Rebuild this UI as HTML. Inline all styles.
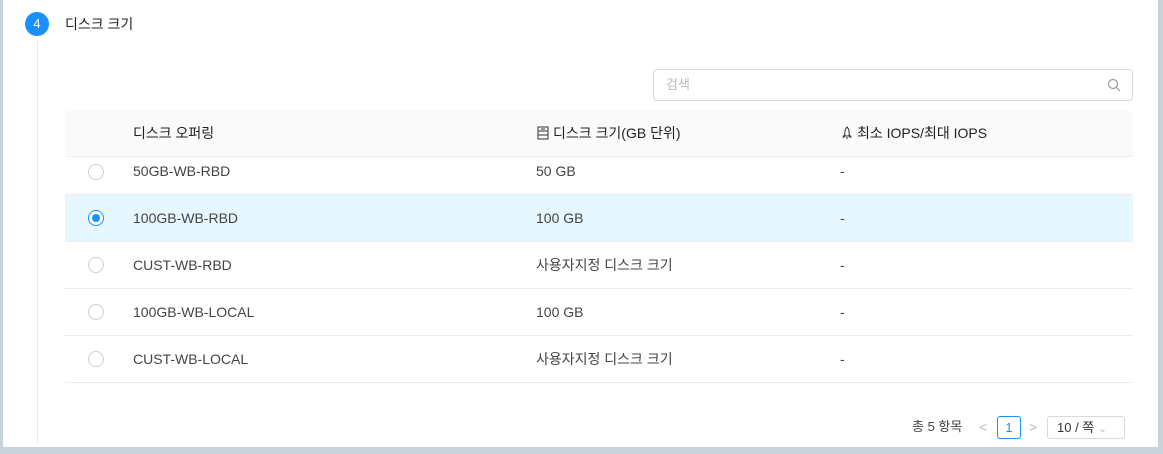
<!DOCTYPE html><html><head><meta charset="utf-8"><style>
*{margin:0;padding:0;box-sizing:border-box}
body{width:1163px;height:454px;background:#c8d2d9;font-family:"Liberation Sans","Noto Sans CJK KR",sans-serif;font-size:14px;color:#333;position:relative;overflow:hidden}
.page{position:absolute;left:3px;top:0;width:1155px;height:447px;background:#fff}
.abs{position:absolute}
.vl{left:34px;top:40px;width:1px;height:403px;background:#e8e8e8}
.step{left:22px;top:12px;width:24px;height:24px;border-radius:50%;background:#1890ff;color:#fff;font-size:13px;text-align:center;line-height:24px}
.title{left:62px;top:14px;font-size:14px;line-height:20px;color:#222}
.search{left:650px;top:69px;width:480px;height:32px;border:1px solid #d9d9d9;border-radius:4px}
.search span{position:absolute;left:12px;top:6px;color:#bbb;font-size:13px;line-height:18px}
.hdr{left:62px;top:111px;width:1068px;height:46px;background:#fafafa;border-bottom:1px solid #eee}
.row{left:62px;width:1068px;border-bottom:1px solid #ececec}
.t{position:absolute;font-size:14px;line-height:20px;height:20px;color:#444;white-space:nowrap}
.radio{position:absolute;left:23px;width:16px;height:16px;border:1px solid #d0d0d0;border-radius:50%;background:#fff}
.radio.on{border-color:#1890ff}
.radio.on::after{content:"";position:absolute;left:3px;top:3px;width:8px;height:8px;border-radius:50%;background:#1890ff}
</style></head><body><div class="page">
<div class="abs vl"></div>
<div class="abs step">4</div>
<div class="abs title">디스크 크기</div>
<div class="abs search"><span>검색</span>
<svg class="abs" style="left:453px;top:8px" width="14" height="14" viewBox="0 0 14 14"><circle cx="6" cy="6" r="4.5" fill="none" stroke="#999" stroke-width="1.2"/><path d="M9.3 9.3L13 13" stroke="#999" stroke-width="1.2"/></svg></div>
<div class="abs hdr">
<div class="t" style="left:68px;top:12px;color:#222">디스크 오퍼링</div>
<svg class="abs" style="left:472px;top:15px" width="12" height="14" viewBox="0 0 12 14"><rect x="1" y="1" width="10" height="12" fill="none" stroke="#333"/><path d="M1 5h10M1 9h10M4 3h4" stroke="#333"/></svg>
<div class="t" style="left:488px;top:12px;color:#222">디스크 크기(GB 단위)</div>
<svg class="abs" style="left:776px;top:15px" width="12" height="14" viewBox="0 0 12 14"><path d="M6 1C4 3 3.5 6 4 10h4c.5-4 0-7-2-9zM4 8L2 11h2M8 8l2 3H8M5 12h2" fill="none" stroke="#333"/></svg>
<div class="t" style="left:792px;top:12px;color:#222">최소 IOPS/최대 IOPS</div>
</div>
<div class="abs row" style="top:157px;height:38px"><div class="radio" style="top:7px"></div><div class="t" style="left:68px;top:4px">50GB-WB-RBD</div><div class="t" style="left:471px;top:4px">50 GB</div><div class="t" style="left:775px;top:4px">-</div></div>
<div class="abs row" style="top:195px;height:47px;background:#e6f7ff"><div class="radio on" style="top:15px"></div><div class="t" style="left:68px;top:13px">100GB-WB-RBD</div><div class="t" style="left:471px;top:13px">100 GB</div><div class="t" style="left:775px;top:13px">-</div></div>
<div class="abs row" style="top:242px;height:47px"><div class="radio" style="top:15px"></div><div class="t" style="left:68px;top:13px">CUST-WB-RBD</div><div class="t" style="left:471px;top:13px">사용자지정 디스크 크기</div><div class="t" style="left:775px;top:13px">-</div></div>
<div class="abs row" style="top:289px;height:47px"><div class="radio" style="top:15px"></div><div class="t" style="left:68px;top:13px">100GB-WB-LOCAL</div><div class="t" style="left:471px;top:13px">100 GB</div><div class="t" style="left:775px;top:13px">-</div></div>
<div class="abs row" style="top:336px;height:47px"><div class="radio" style="top:15px"></div><div class="t" style="left:68px;top:13px">CUST-WB-LOCAL</div><div class="t" style="left:471px;top:13px">사용자지정 디스크 크기</div><div class="t" style="left:775px;top:13px">-</div></div>
<div class="t" style="left:909px;top:417px;font-size:13px">총 5 항목</div>
<div class="t" style="left:976px;top:417px;color:#bbb">&lt;</div>
<div class="abs" style="left:994px;top:416px;width:24px;height:23px;border:1px solid #1890ff;border-radius:3px;color:#1890ff;text-align:center;line-height:21px;font-size:13px">1</div>
<div class="t" style="left:1026px;top:417px;color:#bbb">&gt;</div>
<div class="abs" style="left:1044px;top:416px;width:78px;height:23px;border:1px solid #d9d9d9;border-radius:3px;font-size:13px;line-height:21px;padding-left:9px;color:#333">10 / 쪽 <span style="color:#bbb;font-size:11px">&#8964;</span></div>
</div></body></html>
